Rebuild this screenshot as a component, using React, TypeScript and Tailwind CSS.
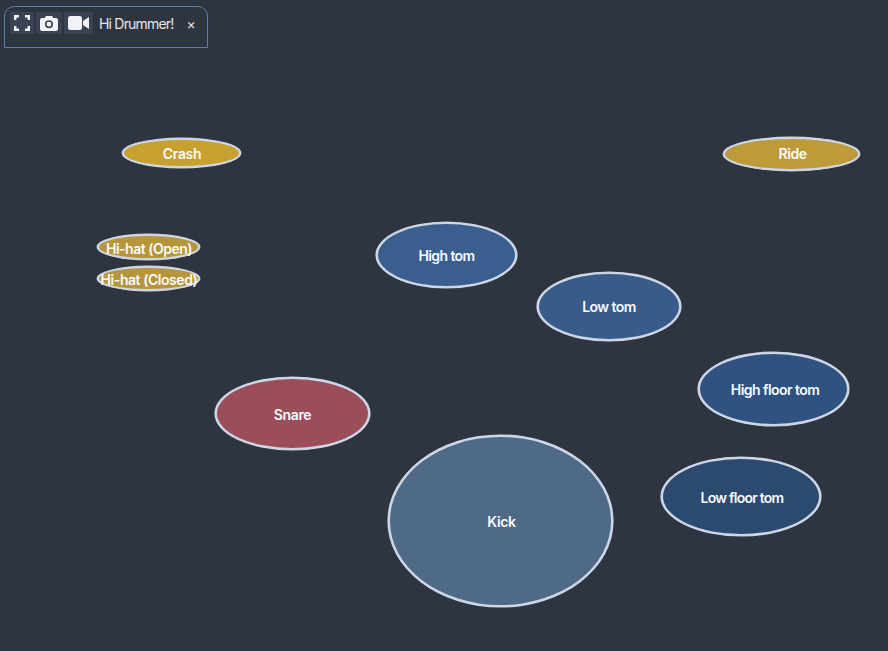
const pads = [
  { name: "Crash", cls: "left-[122px] top-[138px] w-[119px] h-[30px] bg-[#c6a12f] shadow-[0_0_0_0.4px_#cdd6e6]", text: "ml-[1px] tracking-[-0.35px]" },
  { name: "Ride", cls: "left-[723px] top-[137px] w-[137px] h-[34px] bg-[#bd9b39] shadow-[0_0_0_0.4px_#cdd6e6]", text: "ml-[2px] -mt-[1px] tracking-[-0.5px]" },
  { name: "Hi-hat (Open)", cls: "left-[97px] top-[234px] w-[103px] h-[26px] bg-[#b7953a] shadow-[0_0_0_0.4px_#cdd6e6]", text: "tracking-[-0.5px] ml-[1px] mt-[2px]" },
  { name: "Hi-hat (Closed)", cls: "left-[97px] top-[266px] w-[103px] h-[25px] bg-[#b7953a] shadow-[0_0_0_0.4px_#cdd6e6]", text: "tracking-[-0.45px] ml-[1px] mt-[2px]" },
  { name: "High tom", cls: "left-[376px] top-[222px] w-[141px] h-[66px] bg-[#3a5f8f] shadow-[0_0_0_0.6px_#cdd6e6]", text: "tracking-[-0.6px]" },
  { name: "Low tom", cls: "left-[537px] top-[272px] w-[144px] h-[69px] bg-[#385b8a] shadow-[0_0_0_0.6px_#cdd6e6]", text: "-mt-[1px] tracking-[-0.55px]" },
  { name: "High floor tom", cls: "left-[698px] top-[352px] w-[151px] h-[74px] bg-[#2f5280] shadow-[0_0_0_0.6px_#cdd6e6]", text: "ml-[3px] tracking-[-0.55px]" },
  { name: "Low floor tom", cls: "left-[661px] top-[457px] w-[160px] h-[79px] bg-[#2c4a70] shadow-[0_0_0_0.6px_#cdd6e6]", text: "ml-[2px] mt-[2px] tracking-[-0.75px]" },
  { name: "Snare", cls: "left-[215px] top-[377px] w-[155px] h-[73px] bg-[#9b4d59] shadow-[0_0_0_0.6px_#cdd6e6]", text: "mt-[2px] tracking-[-0.35px]" },
  { name: "Kick", cls: "left-[388px] top-[435px] w-[225px] h-[172px] bg-[#4f6a87] shadow-[0_0_0_0.6px_#cdd6e6]", text: "ml-[2px] tracking-[-0.35px]" },
];

function Toolbar() {
  return (
    <div className="absolute left-[4px] top-[6px] w-[204px] h-[42px] border border-[#5b7fae] rounded-t-[10px] flex items-start pl-[5px] pt-[5px]">
      <button className="w-[24px] h-[22px] bg-[#3a4354] flex items-center justify-center">
        <svg width="16" height="16" viewBox="0 0 16 16" fill="none" stroke="#f1f3f6" strokeWidth="2.4">
          <path d="M1.2 5V1.2H5M11 1.2h3.8V5M14.8 11v3.8H11M5 14.8H1.2V11" />
        </svg>
      </button>
      <button className="ml-[2px] w-[26px] h-[22px] bg-[#3a4354] flex items-center justify-center">
        <svg width="18" height="15" viewBox="0 0 18 15">
          <path fill="#f1f3f6" fillRule="evenodd" d="M6 0h6l1.4 2H16a2 2 0 0 1 2 2v9a2 2 0 0 1-2 2H2a2 2 0 0 1-2-2V4a2 2 0 0 1 2-2h2.6zM9 4.2a4 4 0 1 0 0 8 4 4 0 0 0 0-8zM9 5.8a2.4 2.4 0 1 1 0 4.8 2.4 2.4 0 0 1 0-4.8z" />
        </svg>
      </button>
      <button className="ml-[2px] w-[29px] h-[22px] bg-[#3a4354] flex items-center justify-center">
        <svg width="21" height="14" viewBox="0 0 21 14" fill="#f1f3f6">
          <rect x="0" y="0" width="14" height="14" rx="2.5" />
          <path d="M15 5l6-4v12l-6-4z" />
        </svg>
      </button>
      <span className="ml-[6px] mt-[2px] text-[14px] leading-[20px] text-[#e5e7eb] tracking-[-0.8px]">Hi Drummer!</span>
      <span className="ml-[13px] mt-[2px] text-[14px] leading-[20px] text-[#e5e7eb]">×</span>
    </div>
  );
}

export default function App() {
  return (
    <div className="relative w-[888px] h-[651px] overflow-hidden bg-[#2e3440] font-['Inter',sans-serif]">
      <Toolbar />
      {pads.map((p) => (
        <div
          key={p.name}
          className={`absolute rounded-[50%] border-2 border-[#cdd6e6] flex items-center justify-center whitespace-nowrap text-[14px] font-semibold text-[#f8fafc] ${p.cls}`}
        >
          <span className={p.text}>{p.name}</span>
        </div>
      ))}
    </div>
  );
}
